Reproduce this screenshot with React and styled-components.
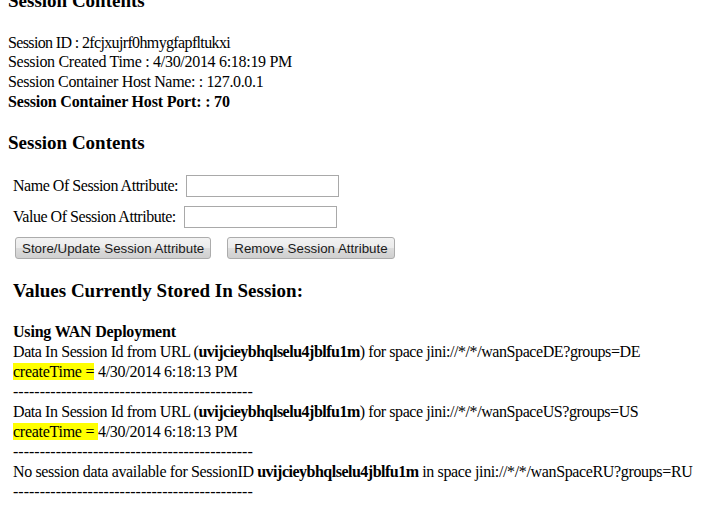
import React from "react";
import styled, { createGlobalStyle } from "styled-components";

const GlobalStyle = createGlobalStyle`
  html, body {
    margin: 0;
    padding: 0;
    background: #fff;
  }
  body {
    font-family: "Liberation Serif", "Times New Roman", serif;
    font-size: 16px;
    color: #000;
  }
`;

const Page = styled.div`
  padding: 0 8px;
  overflow: hidden;
`;

const Heading = styled.h3`
  font-size: 19px;
  line-height: 22px;
  font-weight: bold;
  margin: ${(p) => p.$mt || 0}px 0 0 ${(p) => p.$indent || 0}px;
`;

const Info = styled.div`
  margin-top: 20.6px;
  line-height: 19.7px;
`;

const Line = styled.div`
  font-weight: ${(p) => (p.$bold ? "bold" : "normal")};
  letter-spacing: ${(p) => (p.$ls === undefined ? -0.42 : p.$ls)}px;
  white-space: nowrap;
`;

const Form = styled.form`
  margin-top: 21.3px;
  padding-left: 5px;
  display: flex;
  flex-direction: column;
  gap: 9px;
`;

const Row = styled.div`
  display: flex;
  align-items: center;
  gap: 8px;
  line-height: 20px;
  height: 22px;
`;

const Label = styled.span`
  letter-spacing: -0.47px;
  white-space: nowrap;
`;

const Input = styled.input`
  box-sizing: border-box;
  width: 153px;
  height: 22px;
  margin: 0;
  border: 1px solid #a9a9a9;
  padding: 1px 2px;
  font-family: "Liberation Sans", Arial, sans-serif;
  font-size: 13px;
  outline: none;
`;

const Buttons = styled.div`
  display: flex;
  gap: 16px;
  padding-left: 2px;
`;

const Button = styled.button`
  box-sizing: border-box;
  height: 22px;
  margin: 0;
  padding: 0 6px;
  border: 1px solid #acacac;
  border-radius: 3px;
  background: linear-gradient(#f2f2f2, #ebebeb 50%, #dddddd 51%, #cfcfcf);
  font-family: "Liberation Sans", Arial, sans-serif;
  font-size: 13.33px;
  color: #1a1a1a;
  white-space: nowrap;
`;

const Values = styled.div`
  padding-left: 5px;
  line-height: 20px;
`;

const Block = styled.div`
  margin-top: 20px;
`;

const Id = styled.b`
  letter-spacing: -0.5px;
`;

const Mark = styled.span`
  background: #ffff00;
`;

const Dashes = () => <Line $ls={0}>{"-".repeat(45)}</Line>;

const results = [
  { space: "DE", data: true },
  { space: "US", data: true },
  { space: "RU", data: false },
];

const SESSION = "uvijcieybhqlselu4jblfu1m";

export default function App() {
  return (
    <Page>
      <GlobalStyle />
      <Heading $mt={-10}>Session Contents</Heading>
      <Info>
        <Line $ls={-0.64}>Session ID : 2fcjxujrf0hmygfapfltukxi</Line>
        <Line $ls={-0.3}>Session Created Time : 4/30/2014 6:18:19 PM</Line>
        <Line $ls={-0.35}>Session Container Host Name: : 127.0.0.1</Line>
        <Line $bold $ls={-0.18}>
          Session Container Host Port: : 70
        </Line>
      </Info>

      <Heading $mt={20.3}>Session Contents</Heading>
      <Form onSubmit={(e) => e.preventDefault()}>
        <Row>
          <Label>Name Of Session Attribute:</Label>
          <Input type="text" />
        </Row>
        <Row>
          <Label>Value Of Session Attribute:</Label>
          <Input type="text" />
        </Row>
        <Buttons>
          <Button type="button">Store/Update Session Attribute</Button>
          <Button type="button">Remove Session Attribute</Button>
        </Buttons>
      </Form>

      <Heading $mt={20.7} $indent={5}>
        Values Currently Stored In Session:
      </Heading>
      <Values>
        <Block>
          <Line $bold $ls={-0.2}>
            Using WAN Deployment
          </Line>
          {results.map((r) =>
            r.data ? (
              <React.Fragment key={r.space}>
                <Line>
                  Data In Session Id from URL (<Id>{SESSION}</Id>) for space
                  jini://*/*/wanSpace{r.space}?groups={r.space}
                </Line>
                <Line $ls={-0.27}>
                  <Mark>{r.space === "DE" ? "createTime =" : "createTime = "}</Mark>
                  {r.space === "DE" ? " " : ""}4/30/2014 6:18:13 PM
                </Line>
                <Dashes />
              </React.Fragment>
            ) : (
              <React.Fragment key={r.space}>
                <Line $ls={-0.36}>
                  No session data available for SessionID <Id>{SESSION}</Id>{" "}
                  in space jini://*/*/wanSpace{r.space}?groups={r.space}
                </Line>
                <Dashes />
              </React.Fragment>
            )
          )}
        </Block>
      </Values>
    </Page>
  );
}
